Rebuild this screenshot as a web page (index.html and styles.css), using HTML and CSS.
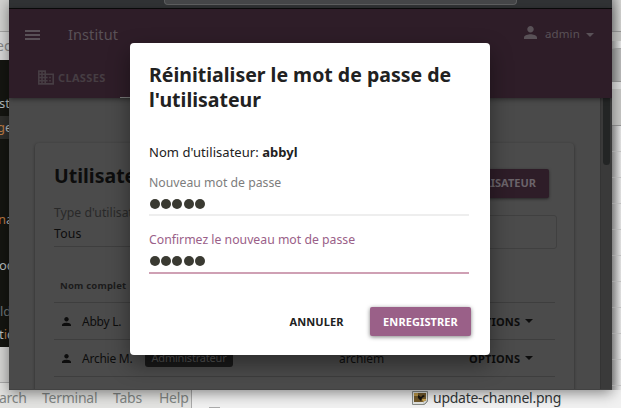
FILE: index.html
```html
<!DOCTYPE html>
<html lang="fr">
<head>
<meta charset="utf-8">
<title>Institut</title>
<link rel="stylesheet" href="styles.css">
</head>
<body>
<svg class="defs" width="0" height="0">
  <symbol id="person" viewBox="4 4 16 16"><path d="M12 12c2.200 0 4-1.800 4-4s-1.800-4-4-4-4 1.800-4 4 1.800 4 4 4zm0 2c-2.700 0-8 1.300-8 4v2h16v-2c0-2.700-5.300-4-8-4z"/></symbol>
  <symbol id="caret" viewBox="0 0 10 5"><path d="M0 0h10L5 5z"/></symbol>
</svg>
<div class="desktop">
  <div class="editor">
    <div class="ed-top"></div>
    <div class="ed-tab"><span>ec</span></div>
    <div class="ed-code">
      <span class="code c1">st</span>
      <span class="code c2"><i>g</i>e</span>
      <span class="code c3"><i>n</i>a</span>
      <span class="code c4">oc</span>
      <span class="code c5">ld</span>
      <span class="code c6">t<i>i</i>c</span>
    </div>
    <div class="ed-foot"></div>
  </div>
  <div class="menubar"><span class="m1">arch</span><span class="m2">Terminal</span><span class="m3">Tabs</span><span class="m4">Help</span></div>
  <div class="files">
    <i class="tiny"></i>
    <svg class="thumb" viewBox="0 0 16 14"><path d="M.5.500h15v10l-3 3H.500z" fill="#e3e5e2" stroke="#888c88"/><path d="M2 2h12v9H2z" fill="#745b2b"/><path d="M2 2h4v3H2z" fill="#c09b4b"/><path d="M6 4l3 2 2-2 2 1-3 2-1 3-3-3z" fill="#17140f"/><path d="M10 8h4v2l-3 1z" fill="#d4aa50"/><path d="M12 13v-3h3z" fill="#fff" stroke="#888c88" stroke-width=".5"/></svg>
    <span class="filename">update-channel.png</span>
  </div>
  <div class="side"><i class="s1"></i><i class="s2"></i><i class="s3"></i><i class="s4"></i><i class="s5"></i></div>

  <div class="window">
    <div class="chrome"><div class="url"></div></div>
    <header class="appbar">
      <div class="topline">
        <svg class="burger" viewBox="0 0 15 10"><path d="M0 0h15v2H0zM0 4h15v2H0zM0 8h15v2H0z"/></svg>
        <span class="brand">Institut</span>
        <svg class="avatar"><use href="#person"/></svg>
        <span class="account">admin</span>
        <svg class="caret"><use href="#caret"/></svg>
      </div>
      <nav class="tabs">
        <div class="tab"><svg class="building" viewBox="2 3 20 18"><path d="M12 7V3H2v18h20V7H12zM6 19H4v-2h2v2zm0-4H4v-2h2v2zm0-4H4V9h2v2zm0-4H4V5h2v2zm4 12H8v-2h2v2zm0-4H8v-2h2v2zm0-4H8V9h2v2zm0-4H8V5h2v2zm10 12h-8v-2h2v-2h-2v-2h2v-2h-2V9h8v10zm-2-8h-2v2h2v-2zm0 4h-2v2h2v-2z"/></svg><span class="tabname">CLASSES</span></div>
        <div class="tab active"></div>
      </nav>
    </header>
    <main class="page">
      <section class="card">
        <div class="cardhead"><h1 class="cardtitle">Utilisateurs</h1><div class="add">UTILISATEUR</div></div>
        <div class="filters">
          <div class="select"><span class="flabel">Type d'utilisateur</span><span class="fvalue">Tous</span></div>
          <div class="search"></div>
        </div>
        <div class="table">
          <div class="thead"><span class="th">Nom complet</span></div>
          <div class="row"><svg class="ricon"><use href="#person"/></svg><span class="name">Abby L.</span><span class="tagcell"></span><span class="login"></span><span class="opts">OPTIONS</span><svg class="rcaret"><use href="#caret"/></svg></div>
          <div class="row"><svg class="ricon"><use href="#person"/></svg><span class="name">Archie M.</span><span class="tagcell"><span class="tag">Administrateur</span></span><span class="login">archiem</span><span class="opts">OPTIONS</span><svg class="rcaret"><use href="#caret"/></svg></div>
        </div>
      </section>
      <div class="scroll"><div class="grip"></div></div>
    </main>
  </div>

  <div class="dialog" role="dialog">
    <h2 class="title">Réinitialiser le mot de passe de l'utilisateur</h2>
    <p class="who">Nom d'utilisateur: <b>abbyl</b></p>
    <div class="field"><span class="label">Nouveau mot de passe</span><div class="dots"><i></i><i></i><i></i><i></i><i></i></div></div>
    <div class="field focus"><span class="label">Confirmez le nouveau mot de passe</span><div class="dots"><i></i><i></i><i></i><i></i><i></i></div></div>
    <div class="actions"><button class="btn">ANNULER</button><button class="btn primary">ENREGISTRER</button></div>
  </div>
</div>
</body>
</html>
```
FILE: styles.css
```css
* { box-sizing: border-box; }
body { margin: 0; font-family: "Noto Sans", sans-serif; }
.defs { position: absolute; }
svg { display: block; fill: currentColor; flex: none; }
span { white-space: nowrap; }
.desktop { position: relative; width: 621px; height: 408px; overflow: hidden; background: #eee; }

/* windows behind the browser */
.editor { position: absolute; left: 0; top: 0; width: 12px; height: 390px; overflow: hidden; }
.ed-top { height: 32px; background: #d2d2d0; border-bottom: 1px solid #a5a5a5; }
.ed-tab { height: 28px; background: #d9d9d9; color: #888; font-size: 14px; line-height: 28px; }
.ed-tab span { margin-left: -4px; }
.ed-code { position: relative; height: 287px; background: #151611; }
.ed-foot { height: 43px; background: linear-gradient(#d5d5d3 35px, #aaa 35px, #aaa 36px, #ddd 36px); }
.code { position: absolute; left: 0; width: 12px; height: 23px; line-height: 23px; font-size: 13px; color: #b9bfc0; }
.code i { font-style: normal; color: #bd7b43; }
.c1 { top: 32px; left: -1px; }
.c2 { top: 56px; left: -3px; width: 15px; background: #30302d; }
.c3 { top: 148px; left: -2px; }
.c4 { top: 194px; left: -1px; }
.c5 { top: 240px; color: #6e7678; }
.c6 { top: 263px; left: -1px; }
.menubar { position: absolute; left: 0; top: 383px; width: 191px; height: 25px; padding-top: 7px; display: flex; background: #e3e3e1; color: #818684; font-size: 14px; line-height: 16px; letter-spacing: -.25px; }
.m1 { width: 43px; margin-left: -1px; }
.m2 { width: 71px; }
.m3 { width: 46px; }
.files { position: absolute; left: 191px; top: 383px; width: 430px; height: 25px; padding: 7px 0 0 17px; display: flex; background: #f1f1f1; border-left: 1px solid #aaa; color: #333738; }
.tiny { width: 11px; height: 2px; margin-top: 17px; background: #aaa; }
.thumb { width: 16px; height: 14px; margin: 1px 5px 0 192px; }
.filename { font-size: 14px; line-height: 16px; letter-spacing: -.27px; }
.side { position: absolute; left: 610px; top: 0; width: 11px; height: 390px; background: linear-gradient(90deg, #aaa 2px, #e9e9e9 11px); display: flex; flex-direction: column; }
.side i { flex: none; }
.s1 { height: 32px; border-bottom: 1px solid #999; background: linear-gradient(90deg, #aaa 2px, #d4d4d2); }
.s2 { height: 17px; border-top: 9px solid #c6c6c4; border-bottom: 1px solid #aaa; }
.s3 { height: 33px; background: linear-gradient(90deg, #999 2px, #bdbdbd); border-bottom: 1px solid #999; }
.s4 { height: 44px; background: #c9c9c7; border-top: 7px solid #ddd; border-bottom: 1px solid #999; }
.s5 { height: 264px; background: repeating-linear-gradient(transparent 0 25px, #c9c9c9 25px 26px); }

/* browser window */
.window { position: absolute; left: 9px; top: 0; width: 603px; height: 390px; overflow: hidden; display: flex; flex-direction: column; background: #4a4a4a; border-bottom: 1px solid #424242; color: #0d0d0d; box-shadow: 0 3px 13px rgba(0,0,0,.45); }
.chrome { height: 9px; flex: none; background: #303234; border-bottom: 1px solid #0b0b0b; }
.url { width: 353px; height: 5px; margin-left: 155px; background: #454648; border: 1px solid #5d5e5f; border-top: 0; border-radius: 0 0 4px 4px; }
.appbar { height: 89px; flex: none; background: #2e1d28; color: #595157; box-shadow: 0 1px 5px rgba(0,0,0,.5); position: relative; }
.topline { height: 52px; display: flex; align-items: center; padding: 0 18px 0 16px; }
.burger { width: 15px; height: 10px; }
.brand { font-size: 14.5px; letter-spacing: .1px; margin: -2px 0 0 28px; }
.avatar { width: 13px; height: 13px; margin-left: auto; margin-top: -5px; }
.account { font-size: 11.5px; letter-spacing: .15px; margin: -3px 6px 0 8px; }
.caret { width: 8px; height: 4px; }
.tabs { display: flex; height: 37px; }
.tab { width: 111px; display: flex; align-items: center; padding: 0 0 4px 29px; color: #463d43; }
.active { border-bottom: 1px solid #777; }
.building { width: 16px; height: 15px; }
.tabname { font-size: 11px; font-weight: 700; letter-spacing: .35px; margin-left: 4px; }
.page { flex: 1; display: flex; justify-content: space-between; }
.card { width: 539px; height: 320px; margin: 45px 0 0 26px; padding: 0 17px 0 19px; border-radius: 4px; background: #4b4b4b; box-shadow: 0 1px 3px rgba(0,0,0,.45); }
.cardhead { display: flex; justify-content: space-between; height: 72px; padding: 26px 8px 0 0; }
.cardtitle { margin: -6px 0 0; font-size: 19.5px; line-height: 26px; font-weight: 700; }
.add { width: 116px; height: 29px; background: #2e1d28; color: #6b646a; font-size: 11px; font-weight: 700; line-height: 28px; padding-right: 13px; text-align: right; border-radius: 2px; box-shadow: 0 1px 3px rgba(0,0,0,.5); }
.filters { display: flex; justify-content: space-between; height: 64px; }
.select { width: 240px; height: 32px; display: flex; flex-direction: column; font-size: 12.25px; border-bottom: 1px solid #3e3e3e; }
.flabel { line-height: 17px; margin-top: -11px; color: #292929; }
.fvalue { line-height: 17px; margin-top: 4px; letter-spacing: .2px; }
.search { width: 200px; height: 34px; border: 1px solid #404040; border-radius: 3px; }
.table { display: flex; flex-direction: column; margin-right: 2px; }
.thead { height: 24px; border-bottom: 1px solid #3e3e3e; font-size: 9.5px; font-weight: 700; letter-spacing: .2px; color: #1b1b1b; line-height: 13px; padding-left: 6px; }
.row { height: 37px; display: flex; align-items: center; border-bottom: 1px solid #3e3e3e; padding-left: 8px; font-size: 12px; letter-spacing: -.25px; }
.ricon { width: 9px; height: 9px; margin-right: 11px; }
.name { width: 63px; }
.tagcell { width: 194px; }
.tag { display: inline-block; width: 88px; height: 18px; line-height: 17px; text-align: center; border-radius: 3px; background: #191919; color: #555; font-size: 11px; letter-spacing: -.2px; }
.login { width: 130px; letter-spacing: -.1px; }
.opts { width: 56px; font-size: 11px; font-weight: 700; letter-spacing: .2px; }
.rcaret { width: 8px; height: 4px; }
.scroll { width: 12px; padding-left: 2px; background: #3a3a3a; border-left: 1px solid #343434; }
.grip { width: 7px; height: 67px; border-radius: 0 0 4px 4px; background: #232525; }

/* password dialog */
.dialog { position: absolute; left: 130px; top: 43px; width: 360px; height: 312px; padding: 19px 21px 19px 19px; display: flex; flex-direction: column; background: #fff; border-radius: 4px; color: #212121; box-shadow: 0 9px 22px rgba(0,0,0,.42); }
.title { margin: 0; font-size: 19.5px; line-height: 25px; font-weight: 700; }
.who { margin: 31px 0 0; font-size: 13px; line-height: 18px; letter-spacing: .04px; }
.field { margin-top: 15px; height: 43px; border-bottom: 2px solid #eee; }
.who + .field { margin-top: 13px; height: 42px; }
.label { display: block; font-size: 12.25px; line-height: 17px; color: #7d7d7d; }
.focus { border-color: #cfa0b4; }
.focus .label { color: #9a6088; }
.dots { display: flex; gap: 1.200px; margin: 8px 0 0 1px; }
.dots i { width: 10px; height: 10px; border-radius: 50%; background: #3a3a32; }
.actions { display: flex; justify-content: flex-end; gap: 13px; margin: auto -2px 0 0; }
.btn { width: 81px; height: 29px; padding: 0; border: 0; border-radius: 2px; background: none; font: 700 11px/29px "Noto Sans", sans-serif; letter-spacing: .1px; color: #212121; }
.primary { width: 101px; background: #9a6088; color: #fff; box-shadow: 0 1px 4px rgba(0,0,0,.5); }
```
